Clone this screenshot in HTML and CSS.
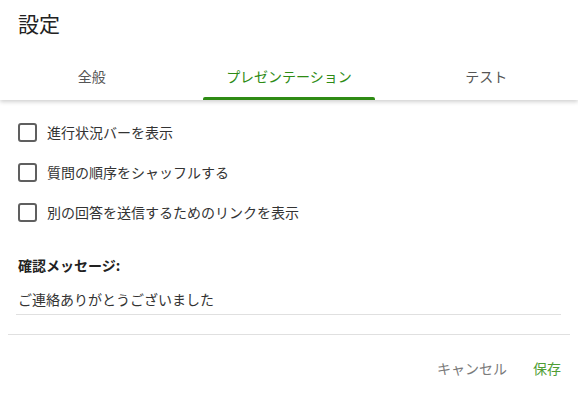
FILE: index.html
```html
<!DOCTYPE html>
<html lang="ja">
<head>
    <meta charset="UTF-8">
    <title>設定</title>
    <link rel="stylesheet" href="styles.css">
</head>
<body>
    <main class="dialog">
        <header class="dialog-head">
            <h1>設定</h1>
            <nav class="tabs">
                <button class="tab">全般</button>
                <button class="tab is-active">プレゼンテーション</button>
                <button class="tab">テスト</button>
            </nav>
        </header>

        <section class="dialog-body">
            <label class="check"><span class="box"></span>進行状況バーを表示</label>
            <label class="check"><span class="box"></span>質問の順序をシャッフルする</label>
            <label class="check"><span class="box"></span>別の回答を送信するためのリンクを表示</label>

            <div class="field">
                <h2>確認メッセージ:</h2>
                <div class="input">ご連絡ありがとうございました</div>
            </div>
        </section>

        <footer class="dialog-actions">
            <button class="btn">キャンセル</button>
            <button class="btn is-primary">保存</button>
        </footer>
    </main>
</body>
</html>
```

FILE: styles.css
```css
*,
*::before,
*::after {
    box-sizing: border-box;
    margin: 0;
    padding: 0;
}

body {
    font-family: "Noto Sans CJK JP", "Noto Sans", sans-serif;
    background: white;
    color: #222;
    width: 578px;
    height: 397px;
    overflow: hidden;
}

.dialog-head {
    box-shadow: 0 2px 4px rgba(0, 0, 0, 0.18);
    position: relative;

    & h1 {
        font-size: 21px;
        font-weight: 400;
        line-height: 28px;
        padding: 9px 18px 0;
        color: #222;
    }
}

.tabs {
    display: grid;
    grid-template-columns: repeat(3, 1fr);
    column-gap: 14px;
    margin-top: 23px;

    & .tab {
        font: inherit;
        font-size: 14px;
        line-height: 20px;
        background: none;
        border: 0;
        color: #555;
        padding: 6px 0 14px;
        position: relative;

        &.is-active {
            color: #2e8b14;

            &::after {
                content: "";
                position: absolute;
                left: 6px;
                right: 6px;
                bottom: 0;
                height: 3px;
                border-radius: 2px 2px 0 0;
                background: #2e8b14;
            }
        }
    }
}

.dialog-body {
    padding: 22px 17px 0 18px;
    display: flex;
    flex-direction: column;
}

.check {
    display: flex;
    align-items: center;
    gap: 10px;
    height: 20px;
    margin-bottom: 20px;
    font-size: 14px;
    color: #333;

    & .box {
        width: 19px;
        height: 19px;
        border: 2px solid #5f5f5f;
        border-radius: 3px;
    }
}

.field {
    margin-top: 13px;

    & h2 {
        font-size: 14px;
        font-weight: 700;
        line-height: 20px;
        color: #222;
    }

    & .input {
        margin: 14px 0 0 -2px;
        padding: 0 0 5px 2px;
        font-size: 14px;
        line-height: 20px;
        color: #333;
        border-bottom: 1px solid #e0e0e0;
    }
}

.dialog-actions {
    margin: 19px 8px 0;
    border-top: 1px solid #e0e0e0;
    display: flex;
    justify-content: flex-end;
    gap: 26px;
    padding: 23px 9px 0 0;

    & .btn {
        font: inherit;
        font-size: 14px;
        line-height: 20px;
        background: none;
        border: 0;
        color: #7a7a7a;

        &.is-primary {
            color: #4f9e35;
        }
    }
}
```
